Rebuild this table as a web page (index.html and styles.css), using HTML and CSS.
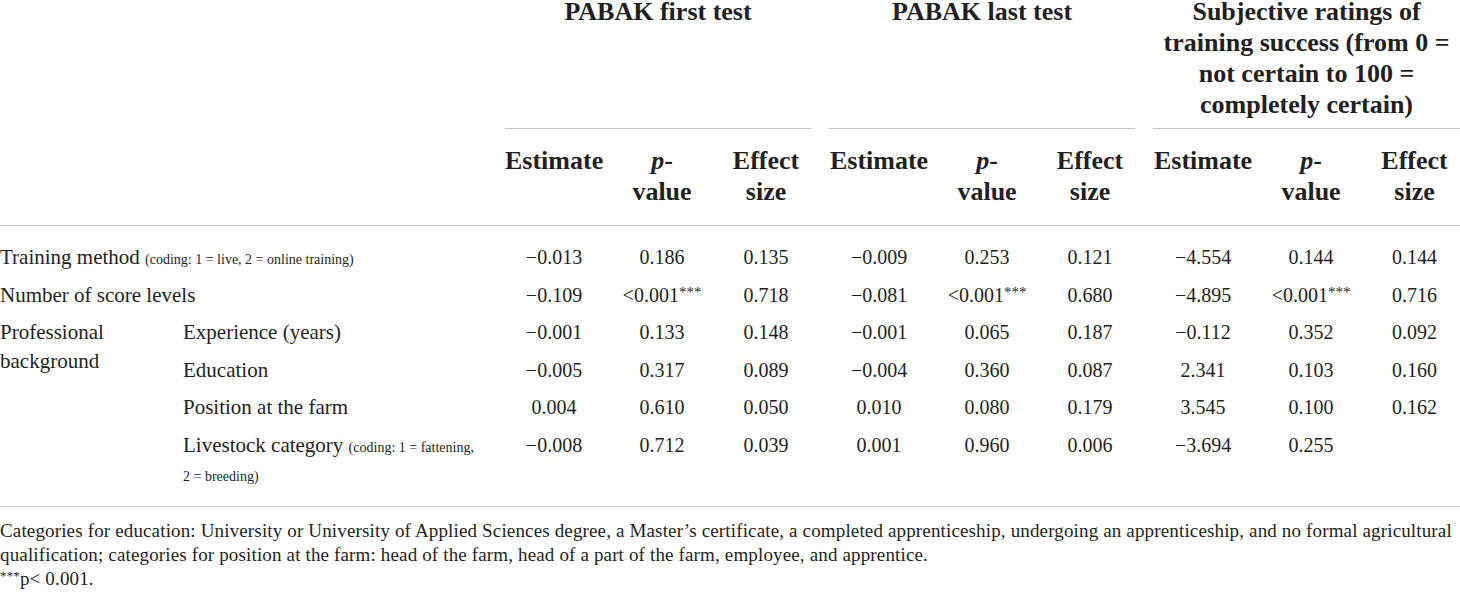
FILE: index.html
```html
<!DOCTYPE html>
<html lang="en">
<head>
    <meta charset="UTF-8">
    <meta name="viewport" content="width=device-width, initial-scale=1.0">
    <title>Training effects on PABAK and subjective ratings</title>
    <link rel="stylesheet" href="styles.css">
</head>
<body>
    <table class="results">
        <colgroup>
            <col class="col-label">
            <col class="col-sublabel">
            <col class="col-est-a">
            <col class="col-p-a">
            <col class="col-es-a">
            <col class="col-est-b">
            <col class="col-p-b">
            <col class="col-es-b">
            <col class="col-est-b">
            <col class="col-p-b">
            <col class="col-es-c">
        </colgroup>
        <thead>
            <tr class="group-row">
                <th colspan="2"></th>
                <th colspan="3" class="group"><div class="group-title">PABAK first test</div></th>
                <th colspan="3" class="group"><div class="group-title">PABAK last test</div></th>
                <th colspan="3" class="group last"><div class="group-title">Subjective ratings of training success (from 0 = not certain to 100 = completely certain)</div></th>
            </tr>
            <tr class="sub-row">
                <th colspan="2"></th>
                <th>Estimate</th>
                <th><i>p</i>-<br>value</th>
                <th>Effect<br>size</th>
                <th>Estimate</th>
                <th><i>p</i>-<br>value</th>
                <th>Effect<br>size</th>
                <th>Estimate</th>
                <th><i>p</i>-<br>value</th>
                <th class="last">Effect<br>size</th>
            </tr>
        </thead>
        <tbody>
            <tr>
                <td colspan="2" class="label">Training method <span class="coding">(coding: 1 = live, 2 = online training)</span></td>
                <td>&minus;0.013</td>
                <td>0.186</td>
                <td>0.135</td>
                <td>&minus;0.009</td>
                <td>0.253</td>
                <td>0.121</td>
                <td>&minus;4.554</td>
                <td>0.144</td>
                <td class="last">0.144</td>
            </tr>
            <tr>
                <td colspan="2" class="label">Number of score levels</td>
                <td>&minus;0.109</td>
                <td>&lt;0.001<span class="sig">***</span></td>
                <td>0.718</td>
                <td>&minus;0.081</td>
                <td>&lt;0.001<span class="sig">***</span></td>
                <td>0.680</td>
                <td>&minus;4.895</td>
                <td>&lt;0.001<span class="sig">***</span></td>
                <td class="last">0.716</td>
            </tr>
            <tr>
                <td rowspan="4" class="label">Professional background</td>
                <td class="sublabel">Experience (years)</td>
                <td>&minus;0.001</td>
                <td>0.133</td>
                <td>0.148</td>
                <td>&minus;0.001</td>
                <td>0.065</td>
                <td>0.187</td>
                <td>&minus;0.112</td>
                <td>0.352</td>
                <td class="last">0.092</td>
            </tr>
            <tr>
                <td class="sublabel">Education</td>
                <td>&minus;0.005</td>
                <td>0.317</td>
                <td>0.089</td>
                <td>&minus;0.004</td>
                <td>0.360</td>
                <td>0.087</td>
                <td>2.341</td>
                <td>0.103</td>
                <td class="last">0.160</td>
            </tr>
            <tr>
                <td class="sublabel">Position at the farm</td>
                <td>0.004</td>
                <td>0.610</td>
                <td>0.050</td>
                <td>0.010</td>
                <td>0.080</td>
                <td>0.179</td>
                <td>3.545</td>
                <td>0.100</td>
                <td class="last">0.162</td>
            </tr>
            <tr>
                <td class="sublabel">Livestock category <span class="coding">(coding: 1 = fattening, <span class="nowrap">2 = breeding)</span></span></td>
                <td>&minus;0.008</td>
                <td>0.712</td>
                <td>0.039</td>
                <td>0.001</td>
                <td>0.960</td>
                <td>0.006</td>
                <td>&minus;3.694</td>
                <td>0.255</td>
                <td class="last"></td>
            </tr>
        </tbody>
    </table>

    <div class="notes">
        <p>Categories for education: University or University of Applied Sciences degree, a Master&rsquo;s certificate, a completed apprenticeship, undergoing an apprenticeship, and no formal agricultural qualification; categories for position at the farm: head of the farm, head of a part of the farm, employee, and apprentice.</p>
        <p><span class="sig">***</span>p&lt; 0.001.</p>
    </div>
</body>
</html>
```

FILE: styles.css
```css
* {
    margin: 0;
    padding: 0;
    box-sizing: border-box;
}

body {
    background: #fff;
    color: #231f20;
    font-family: "Liberation Serif", "Times New Roman", serif;
    overflow: hidden;
}

.results {
    width: 1460px;
    table-layout: fixed;
    border-collapse: collapse;
    border-bottom: 1px solid #c4c4c4;
    margin-top: -4px;
}

.col-label { width: 183px; }
.col-sublabel { width: 313px; }
.col-est-a { width: 116px; }
.col-p-a { width: 100px; }
.col-es-a { width: 108px; }
.col-est-b { width: 118px; }
.col-p-b { width: 98px; }
.col-es-b { width: 108px; }
.col-es-c { width: 100px; }

/* header */
th {
    font-size: 26px;
    font-weight: bold;
    line-height: 31px;
    text-align: center;
    vertical-align: top;
}

.group-row th {
    padding: 0 9px;
}

.group-row th.last {
    padding-right: 0;
}

.group-title {
    min-height: 133px;
    padding-bottom: 8px;
    border-bottom: 1px solid #c4c4c4;
}

.sub-row th {
    padding: 16px 9px 18px;
    border-bottom: 1px solid #c4c4c4;
}

.sub-row th.last {
    padding-right: 0;
}

/* body */
td {
    font-size: 20px;
    line-height: 29px;
    padding: 4px 9px 4.5px;
    text-align: center;
    vertical-align: top;
}

td.last {
    padding-right: 0;
}

td.label,
td.sublabel {
    font-size: 21px;
    text-align: left;
    padding-left: 0;
}

td.sublabel {
    padding-right: 0;
}

tbody tr:first-child td {
    padding-top: 17px;
}

tbody tr:last-child td {
    padding-bottom: 17px;
}

.coding {
    font-size: 14px;
    line-height: 1;
}

.nowrap {
    white-space: nowrap;
}

.sig {
    font-size: 15px;
    line-height: 0;
    vertical-align: 5px;
}

/* footnotes */
.notes {
    padding-top: 12px;
    font-size: 19px;
    line-height: 24px;
    letter-spacing: 0.15px;
}

.notes .sig {
    font-size: 13px;
}
```
